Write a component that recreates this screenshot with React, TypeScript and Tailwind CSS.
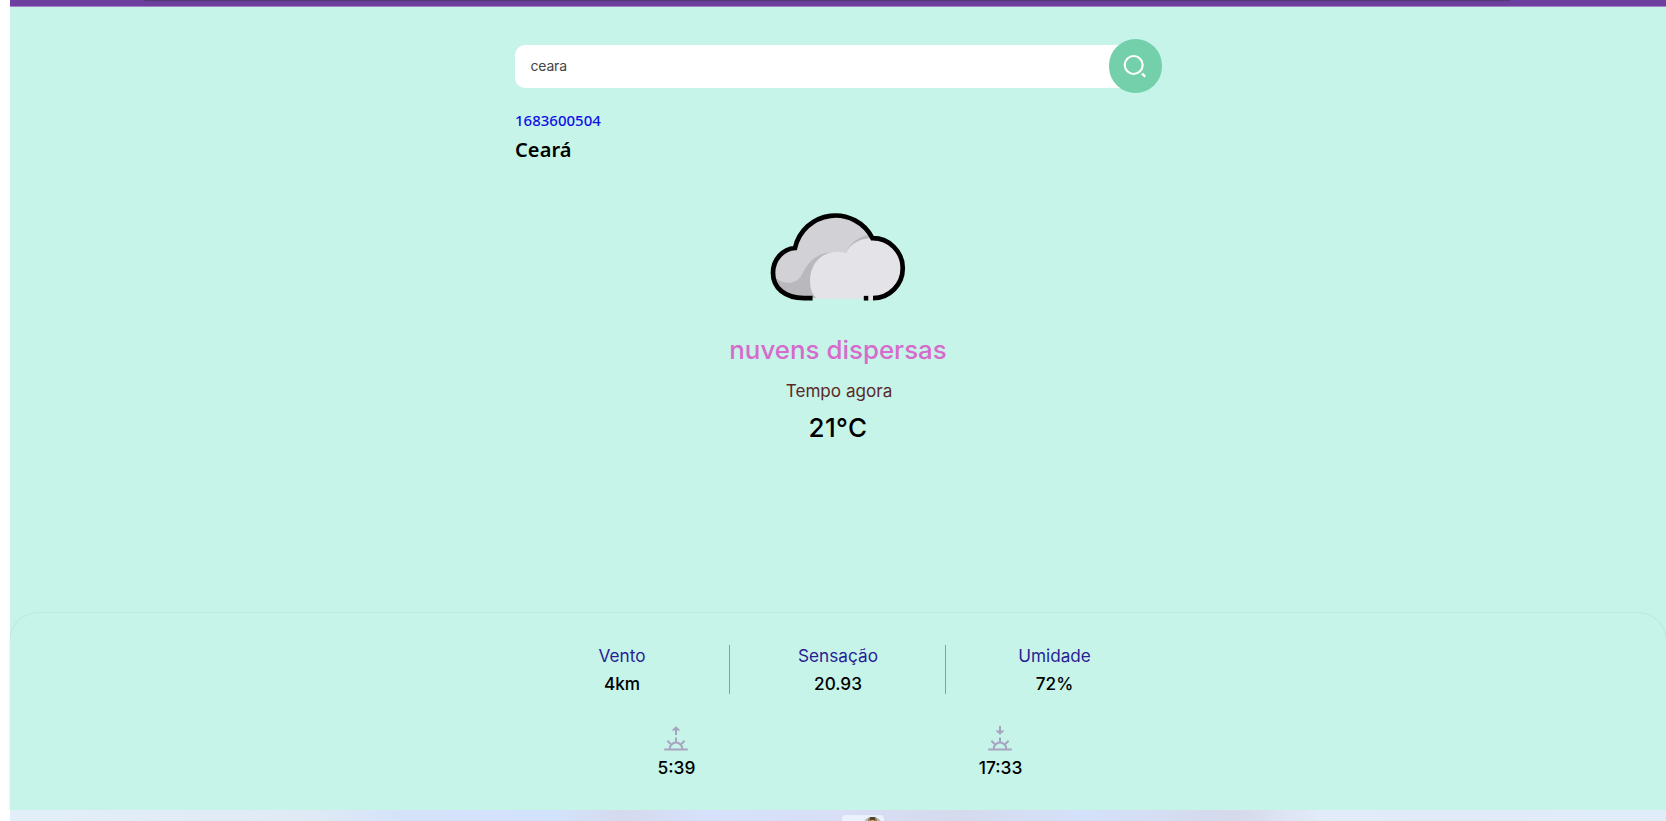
type StatProps = { label: string; value: string; divider?: boolean };

function Stat({ label, value, divider }: StatProps) {
  return (
    <div
      className={
        divider
          ? "flex h-[49px] w-[216px] flex-col items-center border-r border-[#9295b8]"
          : "flex h-[49px] w-[216px] flex-col items-center"
      }
    >
      <span className="mt-px pl-px text-[17.2px] leading-[20px] text-[#2a1e96]">{label}</span>
      <span className="mt-[8px] pl-px text-[17.2px] leading-[20px] font-medium text-black">{value}</span>
    </div>
  );
}

function SunTime({ time, rising }: { time: string; rising?: boolean }) {
  return (
    <div className="flex w-1/2 flex-col items-center">
      <svg width="24" height="25" viewBox="0 0 24 25" fill="none" stroke="#a7a3c0" strokeWidth="2">
        {rising ? (
          <>
            <path d="M12 3.5V9" />
            <path d="M7.500 4.600L12 .3l4.500 4.300z" fill="#a7a3c0" stroke="none" />
          </>
        ) : (
          <>
            <path d="M12 0v5" />
            <path d="M7.500 4.400h9L12 8.800z" fill="#a7a3c0" stroke="none" />
          </>
        )}
        <path d="M.2 23.500h23.600M12 11.500v6M3.400 14.800l3.800 3.800M20.600 14.800l-3.800 3.800M5.600 23a6.400 6.400 0 0 1 12.800 0" />
      </svg>
      <span className="mt-[7px] pl-px text-[17.4px] leading-[20px] font-medium text-black">{time}</span>
    </div>
  );
}

function Cloud() {
  return (
    <svg width="136" height="90" viewBox="0 0 136 90" fill="none">
      <path d="M35 86C15 86 3 76 3 61C3 47 13 37 25 36A41.500 41.500 0 0 1 102.500 26L105 86Z" fill="#d2d1d6" />
      <path d="M4 64C11 72 25 74 31 64C37 53 43 41 64 40L76 41C79 31 89 25 98 23L103 27L112 34L98 86H35C17 86 6 77 4 64Z" fill="#b9b8bd" />
      <path d="M47.500 87C42 83 40 76 40 69C40 46 59 36 76 41C80 32 90 26 103.500 26A30 30 0 0 1 103.500 86L102 87Z" fill="#e4e3e8" />
      <path d="M42.600 86.200H34C15 86 3 76 3 61C3 47 13 37 25 36A41.500 41.500 0 0 1 102.500 26.200A29.800 29.800 0 0 1 103 86.200" stroke="black" strokeWidth="4.7" />
      <path d="M93.800 86.200h4.700" stroke="black" strokeWidth="4.7" />
      <path d="M98.500 86.200h4.500" stroke="#e4e3e8" strokeWidth="4.4" />
    </svg>
  );
}

function SearchBar() {
  return (
    <div className="flex h-[54px] items-center">
      <div className="ml-[0.5px] flex h-[43px] flex-1 items-center rounded-l-[10px] bg-white pl-[16px]">
        <span className="text-[14px] leading-5 tracking-[-0.2px] text-[#444]">ceara</span>
      </div>
      <button className="-ml-[27px] flex size-[53.5px] items-center justify-center rounded-full bg-[#73d0aa]">
        <svg width="24" height="24" viewBox="0 0 24 24" fill="none" stroke="white" strokeWidth="2.1">
          <circle cx="10.7" cy="11" r="9" />
          <path d="M19 19.600l3.200 3" strokeWidth="2.3" />
        </svg>
      </button>
    </div>
  );
}

export default function App() {
  return (
    <div className="flex h-[821px] w-[1666px] flex-col overflow-hidden bg-white pl-[10px] font-['Inter',sans-serif]">
      <header className="flex h-[7px] shrink-0 justify-center border-b border-[#a484c8] bg-[#6d409f]">
        <div className="mr-[22px] h-px w-[1366px] rounded-b bg-[#54367b] shadow-[0_0_2px_#54367b]" />
      </header>

      <main className="flex h-[606px] shrink-0 flex-col items-center bg-[#c6f4e8]">
        <div className="flex w-[648px] flex-col pt-8">
          <SearchBar />
          <div className="mt-[17px] flex flex-col pl-px font-['Noto_Sans',sans-serif]">
            <span className="text-[15px] leading-5 font-medium text-[#1010e8]">1683600504</span>
            <h1 className="mt-[6px] text-[20px] leading-7 font-semibold tracking-[0.1px] text-black">Ceará</h1>
          </div>
        </div>
        <div className="mt-[48px]">
          <Cloud />
        </div>
        <p className="mt-[32px] text-[25.9px] leading-8 font-medium text-[#d66bcb]">nuvens dispersas</p>
        <p className="mt-[15px] pl-[2px] text-[17.1px] leading-5 text-[#5a2929]">Tempo agora</p>
        <p className="mt-[11px] text-[26px] leading-8 font-medium tracking-[0.4px] text-black">21°C</p>
      </main>

      <div className="flex h-[197px] shrink-0 flex-col bg-[#c6f4e8]">
        <section className="flex h-full flex-col items-center rounded-t-[28px] bg-[#c6f4e8] pt-[32px] shadow-[0_0_2px_rgba(0,0,0,0.13)]">
          <div className="flex w-[648px]">
            <Stat label="Vento" value="4km" divider />
            <Stat label="Sensação" value="20.93" divider />
            <Stat label="Umidade" value="72%" />
          </div>
          <div className="mt-[32px] flex w-[648px]">
            <SunTime time="5:39" rising />
            <SunTime time="17:33" />
          </div>
        </section>
      </div>

      <footer className="relative z-10 flex h-3 shrink-0 justify-center bg-[#c9cfe5] bg-[linear-gradient(90deg,#e2eef8_0%,#e0eaf5_18%,#d4e2fa_24%,#d3e2fb_33%,#d5daed_37%,#d6e1fb_42%,#d8dff6_50%,#d5daed_57%,#d4e1fa_65%,#d5d9eb_74%,#e2ebf8_79%,#e0ecf8_100%)]">
        <div className="mt-[5px] ml-[49px] flex h-2 w-[42px] justify-end rounded-t-[4px] bg-[#eaf0fc] pr-[3px]">
          <svg width="17" height="6" viewBox="0 0 17 6" className="mt-px">
            <path d="M0 6Q2 1 8.500 1T17 6" fill="#b9b8bd" />
            <path d="M4 6V3l2-2h5l2 2v3z" fill="#9e8049" />
            <path d="M6 1h5v3H6z" fill="#54452f" />
            <path d="M7.500 4h2v2h-2z" fill="#d9bd75" />
          </svg>
        </div>
      </footer>
    </div>
  );
}
